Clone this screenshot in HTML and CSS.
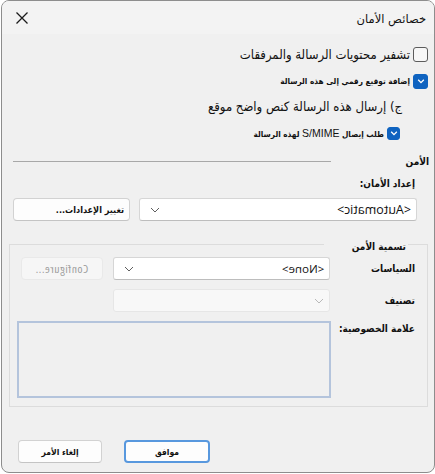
FILE: index.html
```html
<!DOCTYPE html>
<html lang="ar" dir="rtl">
<head>
<meta charset="utf-8">
<title>خصائص الأمان</title>
<link rel="stylesheet" href="styles.css">
</head>
<body>
<div class="window">
  <div class="titlebar">
    <span class="title">خصائص الأمان</span>
    <span class="close" aria-label="إغلاق">
      <svg width="14" height="14" viewBox="0 0 14 14"><path d="M1.5 1.5 L12.5 12.5 M12.5 1.5 L1.5 12.5" stroke="#1b1b1b" stroke-width="1.3" fill="none"/></svg>
    </span>
  </div>
  <div class="content">
    <div class="row-check big r1">
      <span class="box"></span>
      <span class="txt">تشفير محتويات الرسالة والمرفقات</span>
    </div>
    <div class="row-check small r2">
      <span class="box checked"><svg width="10" height="10" viewBox="0 0 10 10"><path d="M2.2 3.8 L5 6.6 L7.8 3.8" stroke="#fff" stroke-width="1.3" fill="none"/></svg></span>
      <span class="txt">إضافة توقيع رقمي إلى هذه الرسالة</span>
    </div>
    <div class="row-plain big r3">ج) إرسال هذه الرسالة كنص واضح موقع</div>
    <div class="row-check small r4">
      <span class="box checked sm"><svg width="10" height="10" viewBox="0 0 10 10"><path d="M2.2 3.8 L5 6.6 L7.8 3.8" stroke="#fff" stroke-width="1.3" fill="none"/></svg></span>
      <span class="txt">طلب إيصال <span class="latin">S/MIME</span> لهذه الرسالة</span>
    </div>

    <div class="section-head">
      <span class="label">الأمن</span>
      <span class="rule"></span>
    </div>
    <div class="field-label">إعداد الأمان:</div>
    <div class="combo-row">
      <div class="combo">
        <span class="mirror auto">&lt;Automatic&gt;</span>
        <svg class="chev" width="10" height="6" viewBox="0 0 10 6"><path d="M1 1 L5 5 L9 1" stroke="#5f5f5f" stroke-width="1" fill="none"/></svg>
      </div>
      <div class="btn change">تغيير الإعدادات...</div>
    </div>

    <fieldset class="group">
      <legend><span>تسمية الأمن</span></legend>
      <div class="grow first">
        <span class="glabel">السياسات</span>
        <div class="combo gcombo">
          <span class="mirror">&lt;None&gt;</span>
          <svg class="chev" width="10" height="6" viewBox="0 0 10 6"><path d="M1 1 L5 5 L9 1" stroke="#5f5f5f" stroke-width="1" fill="none"/></svg>
        </div>
        <div class="btn configure"><span class="mirror">Configure...</span></div>
      </div>
      <div class="grow">
        <span class="glabel">تصنيف</span>
        <div class="combo gcombo disabled-combo">
          <svg class="chev" width="10" height="6" viewBox="0 0 10 6"><path d="M1 1 L5 5 L9 1" stroke="#b9b9b9" stroke-width="1" fill="none"/></svg>
        </div>
      </div>
      <div class="grow top">
        <span class="glabel tl">علامة الخصوصية:</span>
        <div class="textarea"></div>
      </div>
    </fieldset>

    <div class="actions">
      <div class="btn default">موافق</div>
      <div class="btn cancel">إلغاء الأمر</div>
    </div>
  </div>
</div>
</body>
</html>
```
FILE: styles.css
```css
* { box-sizing: border-box; }
html, body { margin: 0; padding: 0; background: #ffffff; }
body {
  font-family: "DejaVu Sans", "Noto Sans", sans-serif;
  color: #111;
}
.window {
  width: 434px;
  height: 473px;
  border: 1px solid #8d8d8d;
  border-radius: 8px;
  background: #f0f0f0;
  overflow: hidden;
  display: flex;
  flex-direction: column;
}
.titlebar {
  height: 33px;
  background: #f3f3f3;
  display: flex;
  align-items: center;
  justify-content: space-between;
  padding: 0 8px 0 13px;
  flex: none;
}
.title { font-size: 11.5px; padding-top: 2px; }
.close { display: flex; width: 14px; height: 14px; }

.content {
  padding: 0 6px 0 7px;
  display: flex;
  flex-direction: column;
}
.row-check, .row-plain {
  display: flex;
  align-items: center;
  gap: 3px;
}
.big, .small, .field-label, .glabel, .section-head .label, .group legend, .btn {
  font-family: "DejaVu Sans Condensed", "DejaVu Sans", sans-serif;
  font-stretch: condensed;
}
.big { font-size: 13px; }
.small { font-size: 8.2px; font-weight: bold; }
.small .latin { font-family: "Liberation Sans", sans-serif; font-weight: normal; font-size: 10.5px; }
.r1 { height: 20px; margin-top: 10px; }
.r2 { height: 20px; margin-top: 7px; }
.r3 { height: 22px; margin-top: 4px; padding-right: 26px; }
.r4 { height: 20px; margin-top: 6px; padding-right: 28px; }

.box {
  width: 15px; height: 15px;
  border: 1px solid #5c5c5c;
  border-radius: 3px;
  background: #f7f7f7;
  display: flex; align-items: center; justify-content: center;
  flex: none;
}
.box.checked { background: #0f63c0; border-color: #0f63c0; }
.box.sm { width: 13px; height: 13px; }

.section-head {
  height: 16px;
  margin-top: 10px;
  display: flex;
  align-items: center;
  margin-right: -1px;
}
.section-head .label { font-size: 10px; font-weight: bold; }
.section-head .rule {
  flex: 1;
  height: 1px;
  background: #a8a8a8;
  margin-right: 75px;
  margin-left: 4px;
}
.field-label {
  font-size: 10px; font-weight: bold;
  height: 16px; line-height: 16px;
  margin-top: 7px;
  padding-right: 13px;
}
.combo-row {
  display: flex;
  gap: 9px;
  height: 23px;
  margin-top: 6px;
  padding-right: 11px;
  padding-left: 4px;
}
.combo {
  flex: 1;
  background: #ffffff;
  border: 1px solid #d6d6d6;
  border-bottom-color: #bdbdbd;
  border-radius: 3px;
  display: flex;
  align-items: center;
  justify-content: space-between;
  padding: 0 5px 0 10px;
}
.mirror {
  display: inline-block;
  transform: scaleX(-1);
  font-family: "Open Sans", "Liberation Sans", sans-serif;
  font-size: 11.5px;
  direction: ltr;
}
.mirror.auto { font-size: 12.5px; }
.btn {
  background: #fdfdfd;
  border: 1px solid #d2d2d2;
  border-bottom-color: #c4c4c4;
  border-radius: 4px;
  display: flex;
  align-items: center;
  justify-content: center;
  font-size: 8.5px;
  font-weight: bold;
}
.btn.change { width: 117px; justify-content: flex-start; padding-right: 5px; font-size: 9px; }

.group {
  margin: 14px 0 0 0;
  padding: 0 12px 8px 9px;
  border: 1px solid #dcdcdc;
  min-width: 0;
}
.group legend {
  font-size: 10px;
  font-weight: bold;
  width: 84px;
  padding: 6px 2px 0 2px;
  margin-right: 7px;
  text-align: right;
  line-height: 12px;
}
.grow {
  display: flex;
  align-items: center;
  height: 23px;
  margin-top: 9px;
}
.grow.first { margin-top: 4px; }
.grow.top { align-items: flex-start; height: auto; }
.glabel {
  width: 85px;
  flex: none;
  font-size: 10px;
  font-weight: bold;
}
.glabel.tl { padding-top: 2px; }
.gcombo { flex: none; width: 217px; align-self: stretch; }
.configure {
  width: 82px;
  flex: none;
  align-self: stretch;
  margin-right: 10px;
  background: #f6f6f6;
  border-color: #e9e9e9;
}
.configure .mirror { color: #9c9c9c; font-weight: normal; letter-spacing: 0.6px; }
.disabled-combo { background: #f8f8f8; border-color: #e6e6e6; }
.textarea {
  flex: none;
  width: 314px;
  height: 77px;
  border: 2px solid #b4c4dc;
  background: #f0f0f0;
  margin-right: -1px;
}

.actions {
  display: flex;
  justify-content: flex-end;
  gap: 22px;
  margin-top: 33px;
  padding-left: 9px;
}
.actions .btn { height: 23px; }
.btn.default { width: 86px; border: 2px solid #5898de; }
.btn.cancel { width: 84px; }
```
